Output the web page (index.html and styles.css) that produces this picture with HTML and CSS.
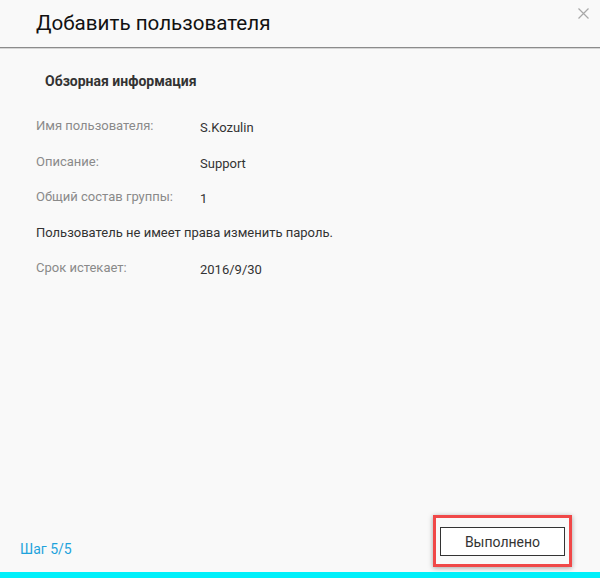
FILE: index.html
```html
<!DOCTYPE html>
<html lang="ru">
<head>
    <meta charset="UTF-8">
    <meta name="viewport" content="width=device-width, initial-scale=1.0">
    <title>Добавить пользователя</title>
    <link rel="stylesheet" href="styles.css">
</head>
<body>
    <div class="dialog">
        <div class="header">
            <h1>Добавить пользователя</h1>
            <span class="close">
                <svg width="11" height="11" viewBox="0 0 11 11">
                    <path d="M0.5 0.5 L10.5 10.5 M10.5 0.5 L0.5 10.5" stroke="#a8a8a8" stroke-width="1.2" fill="none"/>
                </svg>
            </span>
        </div>

        <div class="content">
            <h3>Обзорная информация</h3>
            <div class="row">
                <span class="label">Имя пользователя:</span>
                <span class="value">S.Kozulin</span>
            </div>
            <div class="row">
                <span class="label">Описание:</span>
                <span class="value">Support</span>
            </div>
            <div class="row">
                <span class="label">Общий состав группы:</span>
                <span class="value">1</span>
            </div>
            <div class="row">
                <span class="note">Пользователь не имеет права изменить пароль.</span>
            </div>
            <div class="row">
                <span class="label">Срок истекает:</span>
                <span class="value">2016/9/30</span>
            </div>
        </div>

        <div class="footer">
            <span class="step">Шаг 5/5</span>
            <div class="highlight">
                <button class="done-button">Выполнено</button>
            </div>
        </div>
        <div class="bottom-bar"></div>
    </div>
</body>
</html>
```

FILE: styles.css
```css
* {
    margin: 0;
    padding: 0;
    box-sizing: border-box;
}

body {
    font-family: Roboto, 'Noto Sans', sans-serif;
    background: #f9f9f9;
    color: #333;
    width: 600px;
    height: 578px;
    overflow: hidden;
}

.dialog {
    height: 578px;
    display: flex;
    flex-direction: column;
}

.header {
    height: 48px;
    border-bottom: 1px solid #8c8c8c;
    box-shadow: 0 1px 0 #d6d6d6;
    display: flex;
    justify-content: space-between;
    align-items: flex-start;
    padding: 0 11px 0 36px;
}

.header h1 {
    font-size: 20.6px;
    font-weight: 400;
    color: #111;
    line-height: 24px;
    padding-top: 11px;
}

.close {
    padding-top: 8px;
    line-height: 0;
}

.content {
    flex: 1;
    padding: 23px 36px 0;
}

.content h3 {
    font-size: 14px;
    font-weight: 700;
    color: #333;
    padding-left: 9px;
    line-height: 20px;
    margin-bottom: 27px;
}

.row {
    display: flex;
    font-size: 13px;
    line-height: 16px;
    height: 35.6px;
}

.label {
    width: 164px;
    color: #8a8a8a;
}

.value {
    color: #333;
    padding-top: 2px;
}

.note {
    color: #333;
}

.footer {
    display: flex;
    justify-content: space-between;
    align-items: flex-end;
    padding: 0 28px 5px 20px;
}

.step {
    color: #1ea3dc;
    font-size: 14px;
    line-height: 16px;
    padding-bottom: 10px;
}

.highlight {
    border: 3px solid #f04848;
    padding: 9px 4px 8px 4px;
    box-shadow: 0 1px 5px rgba(0, 0, 0, 0.35);
}

.done-button {
    display: block;
    width: 125px;
    height: 29px;
    background: #fff;
    border: 1px solid #333;
    font-family: Roboto, 'Noto Sans', sans-serif;
    font-size: 14px;
    color: #333;
}

.bottom-bar {
    height: 6px;
    background: #00f0fa;
}
```
